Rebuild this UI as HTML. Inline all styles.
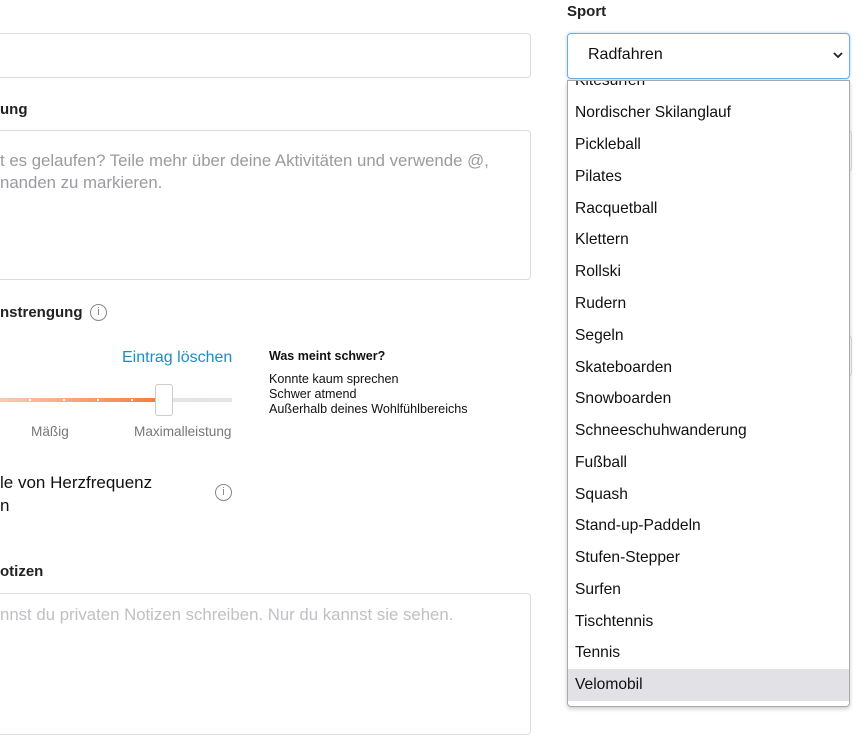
<!DOCTYPE html>
<html><head><meta charset="utf-8"><style>
body{margin:0;width:863px;height:721px;overflow:hidden;background:#fff;font-family:"Liberation Sans",sans-serif;position:relative;color:#222}
.a{position:absolute}
.box{position:absolute;border:1px solid #dcdcdf;border-radius:4px;background:#fff}
.h{font-weight:bold;font-size:15px;color:#222}
.ph{color:#9a9aa0;font-size:16.8px;line-height:22px}
.info{position:absolute;width:15px;height:15px;border:1px solid #888;border-radius:50%;color:#888;font-size:11px;text-align:center;line-height:15px}
.list{position:absolute;left:567px;top:80px;width:281px;height:625px;border:1px solid #aaa;border-radius:0 0 4px 4px;background:#fff;overflow:hidden;box-shadow:0 2px 4px rgba(0,0,0,.2)}
.list div{position:absolute;left:0;right:0;height:32px;line-height:32px;padding-left:7px;font-size:15.6px;color:#111}
</style></head><body>
<div class="box" style="left:-5px;top:33px;width:534px;height:43px"></div>
<div class="a h" style="left:0;top:101px">ung</div>
<div class="box" style="left:-5px;top:130px;width:534px;height:148px"></div>
<div class="a ph" style="left:0;top:150px">t es gelaufen? Teile mehr über deine Aktivitäten und verwende @,<br>nanden zu markieren.</div>
<div class="a h" style="left:0;top:304px">nstrengung</div>
<div class="info" style="left:90px;top:304px">i</div>
<div class="a" style="left:122px;top:349px;color:#1a8fc4;font-size:16px">Eintrag löschen</div>
<div class="a" style="left:0;top:398px;width:232px;height:4px;background:#e4e4e4"></div>
<div class="a" style="left:0;top:398px;width:158px;height:4px;background:linear-gradient(90deg,#f8cbb4,#f47c3c)"></div>
<div class="a" style="left:29px;top:399px;width:2px;height:2px;background:#fff;box-shadow:34px 0 #fff,68px 0 #fff,102px 0 #fff,170px 0 #ddd"></div>
<div class="a" style="left:155px;top:384px;width:16px;height:30px;border:1px solid #ccc;border-radius:3px;background:#fff"></div>
<div class="a" style="left:31px;top:424px;font-size:13.6px;color:#777">Mäßig</div>
<div class="a" style="left:134px;top:424px;font-size:13.6px;color:#777">Maximalleistung</div>
<div class="a" style="left:269px;top:349px;font-size:12.5px;font-weight:bold;color:#111">Was meint schwer?</div>
<div class="a" style="left:269px;top:372px;font-size:12.6px;line-height:15px;color:#111">Konnte kaum sprechen<br>Schwer atmend<br>Außerhalb deines Wohlfühlbereichs</div>
<div class="a" style="left:0;top:471px;font-size:17px;line-height:23px;color:#111">le von Herzfrequenz<br>n</div>
<div class="info" style="left:215px;top:484px">i</div>
<div class="a h" style="left:0;top:563px">otizen</div>
<div class="box" style="left:-5px;top:593px;width:534px;height:140px"></div>
<div class="a ph" style="left:0;top:604px;color:#c0c0c5">nnst du privaten Notizen schreiben. Nur du kannst sie sehen.</div>
<div class="box" style="left:830px;top:130px;width:20px;height:40px"></div>
<div class="box" style="left:830px;top:335px;width:20px;height:40px"></div>
<div class="a h" style="left:567px;top:3px">Sport</div>
<div class="a" style="left:567px;top:33px;width:281px;height:44px;border:1px solid #6aaee8;border-radius:4px;box-shadow:0 0 3px #a8d0f5;background:#fff"></div>
<div class="a" style="left:588px;top:46px;font-size:16px;color:#111">Radfahren</div>
<svg class="a" style="left:833px;top:51px" width="10" height="8"><path d="M1 2l4 4 4-4" stroke="#222" stroke-width="1.8" fill="none"/></svg>
<div class="list">
<div style="top:-16px">Kitesurfen</div>
<div style="top:16px">Nordischer Skilanglauf</div>
<div style="top:48px">Pickleball</div>
<div style="top:80px">Pilates</div>
<div style="top:112px">Racquetball</div>
<div style="top:143px">Klettern</div>
<div style="top:175px">Rollski</div>
<div style="top:207px">Rudern</div>
<div style="top:239px">Segeln</div>
<div style="top:271px">Skateboarden</div>
<div style="top:302px">Snowboarden</div>
<div style="top:334px">Schneeschuhwanderung</div>
<div style="top:366px">Fußball</div>
<div style="top:398px">Squash</div>
<div style="top:429px">Stand-up-Paddeln</div>
<div style="top:461px">Stufen-Stepper</div>
<div style="top:493px">Surfen</div>
<div style="top:525px">Tischtennis</div>
<div style="top:556px">Tennis</div>
<div style="top:588px;background:#e1e1e6">Velomobil</div>
</div>
</body></html>
